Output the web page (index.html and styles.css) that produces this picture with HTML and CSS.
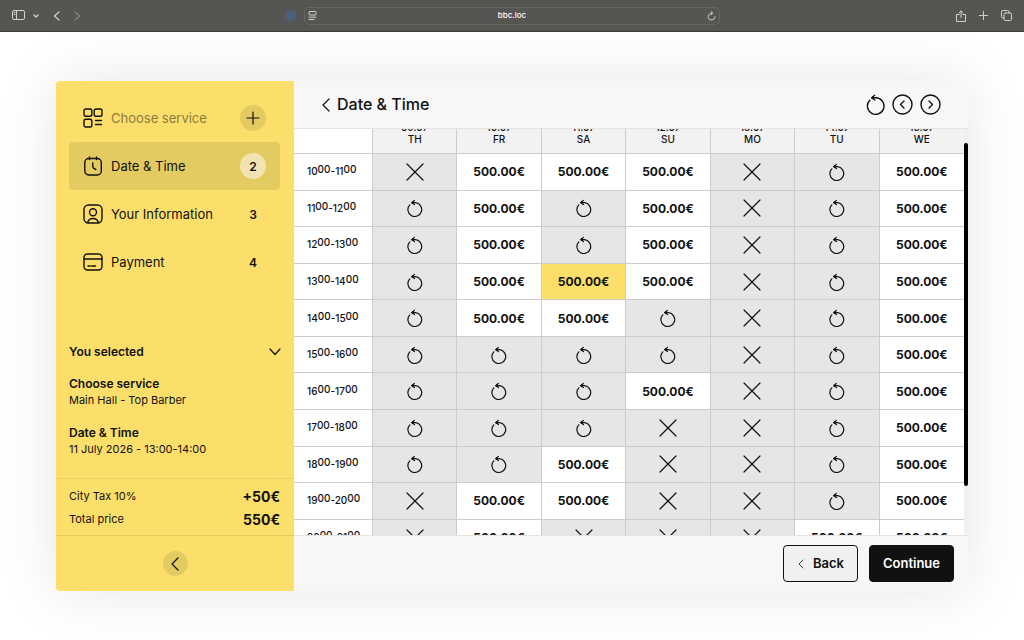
FILE: index.html
```html
<!DOCTYPE html>
<html lang="en">
<head>
  <meta charset="UTF-8">
  <title>Date &amp; Time</title>
  <link rel="stylesheet" href="styles.css">
</head>
<body>
  <svg class="sprite" aria-hidden="true">
    <symbol id="icon-cross" viewBox="0 0 18 18"><path d="M1 1l16 16M17 1L1 17"/></symbol>
    <symbol id="icon-reload" viewBox="0 0 18 18"><path d="M3.800 5.800A6.900 6.900 0 1 0 9.500 3.700H6"/><path d="M8.300 1.500L5.800 3.600l2.700 2"/><path d="M6.900 2.700l-1.100.9 1.200.9z"/></symbol>
    <symbol id="icon-left" viewBox="0 0 12 14"><path d="M9 1L3 7l6 6"/></symbol>
  </svg>

  <header class="browser">
    <div class="browser-left">
      <button class="browser-btn" aria-label="Sidebar">
        <svg width="13" height="11" viewBox="0 0 13 11"><rect x=".5" y=".5" width="12" height="9" rx="1.5"/><path d="M4.5.5v9M2 2.5h1M2 4.5h1"/></svg>
      </button>
      <button class="browser-btn" aria-label="Tab groups">
        <svg width="6" height="4" viewBox="0 0 6 4"><path d="M1 1l2 2 2-2" stroke-width="1.4"/></svg>
      </button>
      <button class="browser-btn nav-prev" aria-label="Go back">
        <svg width="7" height="10" viewBox="0 0 7 10"><path d="M6 1L1.500 5 6 9" stroke-width="1.3"/></svg>
      </button>
      <button class="browser-btn nav-next" aria-label="Go forward" disabled>
        <svg width="7" height="10" viewBox="0 0 7 10"><path d="M1 1l4.500 4L1 9" stroke-width="1.200"/></svg>
      </button>
      <svg class="shield" width="11" height="12" viewBox="0 0 11 12"><path d="M5.500.7l4.600 2.400v5.600l-4.600 2.600-4.600-2.600V3.100z"/><path d="M5.500 2.800l2.700 1v2.600q-.5 2-2.700 2.900-2.200-.9-2.700-2.900V3.800zM5.500 4.500v3M4 6h3"/></svg>
    </div>
    <div class="address">
      <svg width="9" height="9" viewBox="0 0 9 9"><rect x="1" y=".5" width="7" height="3.500" rx=".8"/><path d="M1 6.200h7M1 8.500h5"/></svg>
      <span>bbc.loc</span>
      <button class="browser-btn" aria-label="Reload">
        <svg width="9" height="10" viewBox="0 0 9 10"><path d="M8 5.600A3.400 3.400 0 1 1 5.200 2.200M4 .6l1.800 1.700L4 4"/></svg>
      </button>
    </div>
    <div class="browser-right">
      <button class="browser-btn" aria-label="Share">
        <svg width="10" height="12" viewBox="0 0 10 12"><path d="M3.300 4.500H.5v7h9v-7H6.700M5 7.500V1M3 3l2-2 2 2"/></svg>
      </button>
      <button class="browser-btn" aria-label="New tab">
        <svg width="9" height="9" viewBox="0 0 9 9"><path d="M4.500 0v9M0 4.500h9"/></svg>
      </button>
      <button class="browser-btn" aria-label="Tab overview">
        <svg width="11" height="11" viewBox="0 0 11 11"><rect x="3" y="3" width="7.500" height="7.500" rx="1.300"/><path d="M3 8H2A1.500 1.500 0 0 1 .5 6.500V2A1.500 1.500 0 0 1 2 .5h4.500A1.500 1.500 0 0 1 8 2v1"/></svg>
      </button>
    </div>
  </header>

  <main class="page">
    <div class="widget">
      <aside class="sidebar">
        <nav class="steps">
          <button class="step done">
            <svg class="step-icon" viewBox="0 0 20 20"><rect x="1" y="1" width="7.800" height="7.300" rx="1.800"/><rect x="11.200" y="1" width="7.800" height="7.300" rx="1.800"/><rect x="1" y="11.200" width="7.800" height="7.800" rx="1.800"/><path d="M12.500 12.500h6M12.500 16.500h6"/></svg>
            <span class="step-name">Choose service</span>
            <span class="step-badge"><svg width="14" height="14" viewBox="0 0 14 14"><path d="M7 1v12M1 7h12"/></svg></span>
          </button>
          <button class="step active">
            <svg class="step-icon" viewBox="0 0 20 20"><rect x="1.800" y="2.500" width="16.500" height="16.500" rx="4"/><path d="M6.500 1v2.500M13.500 1v2.500M9.800 7v4q0 1 3 2.500"/></svg>
            <span class="step-name">Date &amp; Time</span>
            <span class="step-badge">2</span>
          </button>
          <button class="step">
            <svg class="step-icon" viewBox="0 0 20 20"><rect x="1" y="1" width="18" height="18" rx="4.500"/><circle cx="10" cy="8.300" r="3.500"/><path d="M4.800 18.500c.5-2.700 2.400-4 5.200-4s4.700 1.300 5.200 4"/></svg>
            <span class="step-name">Your Information</span>
            <span class="step-badge">3</span>
          </button>
          <button class="step">
            <svg class="step-icon" viewBox="0 0 20 20"><rect x="1" y="2" width="18" height="16" rx="3.500"/><path d="M1 7h18M5 14h2M8.500 14h4"/></svg>
            <span class="step-name">Payment</span>
            <span class="step-badge">4</span>
          </button>
        </nav>

        <section class="selected">
          <button class="selected-toggle">
            <span>You selected</span>
            <svg width="12" height="8" viewBox="0 0 12 8"><path d="M1 1l5 5.500L11 1"/></svg>
          </button>
          <dl class="selected-item">
            <dt>Choose service</dt>
            <dd>Main Hall - Top Barber</dd>
          </dl>
          <dl class="selected-item">
            <dt>Date &amp; Time</dt>
            <dd>11 July 2026 - 13:00-14:00</dd>
          </dl>
        </section>

        <section class="totals">
          <div class="total-row"><span>City Tax 10%</span><strong>+50€</strong></div>
          <div class="total-row"><span>Total price</span><strong>550€</strong></div>
        </section>

        <div class="sidebar-foot">
          <button class="collapse" aria-label="Collapse menu">
            <svg width="12" height="14"><use href="#icon-left"/></svg>
          </button>
        </div>
      </aside>

      <section class="content">
        <header class="content-head">
          <button class="title">
            <svg width="12" height="14"><use href="#icon-left"/></svg>
            <span>Date &amp; Time</span>
          </button>
          <div class="pager">
            <button aria-label="Reset">
              <svg width="20" height="22" viewBox="0 0 20 22"><path d="M4.800 6.200A8.300 8.300 0 1 0 11.500 3.800H7"/><path d="M9.600 1.300L6.800 3.700 9.900 6"/><path d="M8.200 2.700l-1.400 1 1.500 1z"/></svg>
            </button>
            <button aria-label="Previous week">
              <svg width="21" height="21" viewBox="0 0 21 21"><circle cx="10.500" cy="10.500" r="9.500"/><path d="M12 7l-3.500 3.500L12 14"/></svg>
            </button>
            <button aria-label="Next week">
              <svg width="21" height="21" viewBox="0 0 21 21"><circle cx="10.500" cy="10.500" r="9.500"/><path d="M9 7l3.500 3.500L9 14"/></svg>
            </button>
          </div>
        </header>

        <div class="schedule">
          <div class="schedule-scroll" id="scroll">
            <table class="slots">
              <thead>
                <tr>
                  <th class="time"></th>
                  <th>09.07<br>TH</th>
                  <th>10.07<br>FR</th>
                  <th>11.07<br>SA</th>
                  <th>12.07<br>SU</th>
                  <th>13.07<br>MO</th>
                  <th>14.07<br>TU</th>
                  <th>15.07<br>WE</th>
                </tr>
              </thead>
              <tbody id="slots"></tbody>
            </table>
          </div>
          <div class="track"><div class="thumb" id="thumb"></div></div>
        </div>

        <footer class="content-foot">
          <button class="btn btn-back">
            <svg width="8" height="10"><use href="#icon-left"/></svg>
            <span>Back</span>
          </button>
          <button class="btn btn-primary">Continue</button>
        </footer>
      </section>
    </div>
  </main>

  <script src="slots.js"></script>
</body>
</html>
```
FILE: styles.css
```css
* {
  margin: 0;
  padding: 0;
  box-sizing: border-box;
}

body {
  display: flex;
  flex-direction: column;
  height: 100vh;
  font-family: Inter, "Liberation Sans", sans-serif;
  font-size: 12px;
  line-height: 17px;
  color: #111111;
  background: #ffffff;
}

button {
  font: inherit;
  color: inherit;
  background: none;
  border: none;
  cursor: pointer;
}

svg {
  display: block;
  flex: none;
  fill: none;
  stroke: currentColor;
  stroke-width: 1.2;
  stroke-linecap: round;
  stroke-linejoin: round;
}

.sprite {
  position: absolute;
  width: 0;
  height: 0;
}

/* Browser bar */
.browser {
  display: grid;
  grid-template-columns: 19fr 26fr 19fr;
  align-items: center;
  flex: none;
  height: 32px;
  background: #555552;
  border-bottom: 1px solid #3c3c3a;
  color: #d0d0ce;
}

.browser svg {
  stroke-width: 1;
}

.browser-left,
.browser-right {
  display: flex;
  align-items: center;
}

.browser-left {
  gap: 8px;
  padding: 0 8px 0 12px;
}

.browser-right {
  justify-content: flex-end;
  gap: 13px;
  padding-right: 12px;
}

.nav-prev,
.nav-next {
  padding-left: 6px;
}

.nav-next {
  opacity: 0.4;
}

.shield {
  margin-left: auto;
  color: #456a9c;
}

.address {
  display: flex;
  align-items: center;
  justify-content: space-between;
  height: 18px;
  padding: 0 3px;
  border: 1px solid #656562;
  border-radius: 5px;
}

.address span {
  font-size: 8px;
  font-weight: 500;
  color: #ffffff;
}

/* Widget */
.page {
  display: flex;
  flex: 1;
  min-height: 0;
  padding: 49px 56px;
}

.widget {
  display: flex;
  flex: 1;
  min-width: 0;
  border-radius: 4px;
  overflow: hidden;
  box-shadow: 0 0 60px rgba(0, 0, 0, 0.1);
}

.sidebar {
  display: flex;
  flex-direction: column;
  flex: none;
  width: 238px;
  background: #fcdf6b;
}

.steps {
  padding: 13px 14px 13px 13px;
}

.step {
  display: flex;
  align-items: center;
  gap: 8px;
  width: 100%;
  height: 48px;
  padding: 0 14px;
  border-radius: 4px;
  font-size: 13px;
  text-align: left;
}

.step.active {
  background: #e3cb62;
}

.step-icon {
  width: 20px;
  height: 20px;
  stroke-width: 1.4;
}

.step-name {
  flex: 1;
}

.step.done .step-name {
  opacity: 0.5;
}

.step-badge {
  display: flex;
  align-items: center;
  justify-content: center;
  width: 26px;
  height: 26px;
  border-radius: 50%;
  font-size: 12px;
  font-weight: 600;
}

.step.done .step-badge {
  background: #e3cb62;
}

.step.active .step-badge {
  background: #f1e4b0;
}

.selected {
  margin-top: auto;
  padding: 0 13px 20px;
}

.selected-toggle {
  display: flex;
  align-items: center;
  justify-content: space-between;
  width: 100%;
  font-weight: 600;
}

.selected-item {
  margin-top: 15px;
}

.selected-item dt {
  font-weight: 600;
}

.selected-item dd,
.total-row span {
  font-size: 11px;
}

.totals {
  padding: 6px 14px 4px 13px;
  border-top: 1px solid #ecd265;
}

.total-row {
  display: flex;
  align-items: center;
  justify-content: space-between;
  height: 23px;
}

.total-row strong {
  font-size: 14px;
}

.sidebar-foot {
  display: flex;
  align-items: center;
  justify-content: center;
  height: 56px;
  border-top: 1px solid #e3c960;
}

.collapse {
  display: flex;
  align-items: center;
  justify-content: center;
  width: 25px;
  height: 25px;
  border-radius: 50%;
  background: #e3cb62;
}

/* Content */
.content {
  display: flex;
  flex-direction: column;
  flex: 1;
  min-width: 0;
  background: #f7f7f7;
}

.content-head {
  display: flex;
  align-items: center;
  justify-content: space-between;
  flex: none;
  height: 48px;
  padding: 0 27px 0 26px;
  border-bottom: 1px solid #e4e4e4;
}

.title {
  display: flex;
  align-items: center;
  gap: 5px;
  font-size: 16px;
  font-weight: 500;
}

.pager {
  display: flex;
  align-items: center;
  gap: 7px;
}

.pager svg {
  stroke-width: 1.4;
}

.schedule {
  display: flex;
  flex: 1;
  min-height: 0;
  background: #ffffff;
}

.schedule-scroll {
  flex: 1;
  min-width: 0;
  overflow-y: auto;
  scrollbar-width: none;
}

.track {
  flex: none;
  width: 4px;
  background: #f0f0f0;
}

.thumb {
  background: #000000;
  border-radius: 2px;
}

/* Slots table */
.slots {
  width: 100%;
  height: 480px;
  table-layout: fixed;
  border-collapse: separate;
  border-spacing: 0;
}

.slots th,
.slots td {
  border-right: 1px solid #cccccc;
  border-bottom: 1px solid #cccccc;
  text-align: center;
  vertical-align: middle;
}

.slots th:last-child,
.slots td:last-child {
  border-right: none;
}

.slots thead th {
  height: 41px;
  background: #f2f2f2;
  font-size: 10px;
  font-weight: 500;
  line-height: 12px;
}

.slots thead .time {
  width: 79px;
  background: #ffffff;
}

.slots tbody th {
  padding-left: 13px;
  font-size: 10px;
  font-weight: 500;
  text-align: left;
}

.slots sup {
  font-size: 10px;
  line-height: 0;
  vertical-align: 2px;
}

.slots td {
  height: 36px;
  font-weight: 700;
}

.slots td button {
  display: block;
  width: 100%;
  height: 100%;
}

.slots td svg {
  width: 18px;
  height: 18px;
  margin: 0 auto;
}

.slots .off {
  background: #e6e6e6;
}

.slots .picked {
  background: #fcdf6b;
}

.content-foot {
  display: flex;
  align-items: center;
  justify-content: flex-end;
  flex: none;
  gap: 11px;
  height: 56px;
  padding: 0 14px;
  border-top: 1px solid #e4e4e4;
}

.btn {
  display: flex;
  align-items: center;
  justify-content: center;
  gap: 8px;
  height: 37px;
  padding: 0 13px;
  border: 1px solid #111111;
  border-radius: 4px;
  font-size: 13px;
  font-weight: 600;
}

.btn-back {
  background: #f0f0f0;
}

.btn-primary {
  background: #111111;
  color: #ffffff;
}
```
FILE: slots.js
```js
// x - closed, o - waiting list, p - free, s - picked
const rows = [
  'xpppxop',
  'opopxop',
  'opopxop',
  'opspxop',
  'oppoxop',
  'ooooxop',
  'ooopxop',
  'oooxxop',
  'oopxxop',
  'xppxxop',
  'xpxxxpp',
  'xxxxxxx'
];

const price = '500.00€';

function cell(type) {
  if (type === 'x') return '<td class="off"><svg><use href="#icon-cross"/></svg></td>';
  if (type === 'o') return '<td class="off"><svg><use href="#icon-reload"/></svg></td>';
  return `<td class="${type === 's' ? 'picked' : 'free'}"><button>${price}</button></td>`;
}

document.getElementById('slots').innerHTML = rows.map((row, i) => {
  const from = 10 + i;
  return `<tr><th>${from}<sup>00</sup>-${from + 1}<sup>00</sup></th>${[...row].map(cell).join('')}</tr>`;
}).join('');

const box = document.getElementById('scroll');
const thumb = document.getElementById('thumb');

function moveThumb() {
  const ratio = box.clientHeight / box.scrollHeight;
  thumb.style.height = `${Math.round(box.clientHeight * ratio)}px`;
  thumb.style.marginTop = `${Math.round(box.scrollTop * ratio)}px`;
}

box.addEventListener('scroll', moveThumb);
window.addEventListener('resize', moveThumb);
box.scrollTop = 16;
moveThumb();
```
